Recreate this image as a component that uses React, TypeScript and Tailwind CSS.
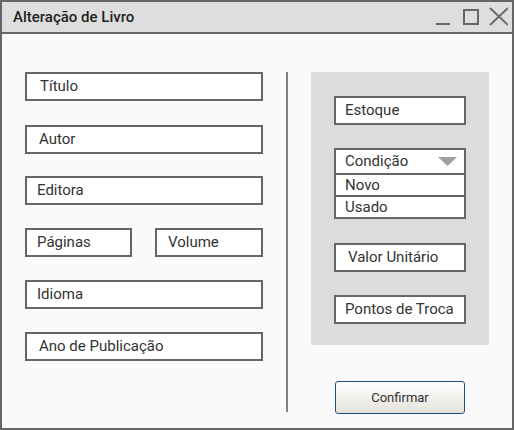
import React from "react";

function Field({ label, className = "", pl = "pl-[11px]" }: { label: string; className?: string; pl?: string }) {
  return (
    <div className={`h-[29px] border-2 border-[#666] bg-white flex items-center text-[15px] text-[#333] ${pl} ${className}`}>
      {label}
    </div>
  );
}

export default function App() {
  return (
    <div
      className="w-[514px] h-[430px] border-2 border-[#666] bg-[#fafafa] flex flex-col overflow-hidden"
      style={{ fontFamily: "Roboto, 'Liberation Sans', sans-serif" }}
    >
      <div className="h-[32px] shrink-0 bg-[#dedede] border-b-2 border-[#666] flex items-center pl-[11px]">
        <span className="text-[15px] font-medium text-[#222] mt-[1px]">Alteração de Livro</span>
        <svg className="ml-auto mr-[4px]" width="72" height="30" viewBox="0 0 72 30">
          <rect x="0" y="21" width="14" height="2" fill="#666" />
          <rect x="28" y="8" width="14" height="14" fill="none" stroke="#666" strokeWidth="2" />
          <path d="M54 6 L72 23 M72 6 L54 23" stroke="#666" strokeWidth="1.8" fill="none" />
        </svg>
      </div>
      <div className="flex pl-[23px] pt-[38px]">
        <div className="w-[238px] flex flex-col">
          <Field label="Título" pl="pl-[13px]" />
          <Field label="Autor" pl="pl-[12px]" className="mt-[24px]" />
          <Field label="Editora" pl="pl-[10px]" className="mt-[22px]" />
          <div className="flex justify-between mt-[23px]">
            <Field label="Páginas" pl="pl-[10px]" className="w-[107px]" />
            <Field label="Volume" pl="pl-[11px]" className="w-[108px]" />
          </div>
          <Field label="Idioma" pl="pl-[10px]" className="mt-[23px]" />
          <Field label="Ano de Publicação" pl="pl-[12px]" className="mt-[23px]" />
        </div>
        <div className="ml-[23px] w-[2px] h-[340px] bg-[#808080]" />
        <div className="ml-[23px] flex flex-col">
          <div className="w-[178px] h-[273px] bg-[#dcdcdc] pl-[23px] pt-[24px] flex flex-col">
            <Field label="Estoque" pl="pl-[9px]" className="w-[132px] h-[28px]" />
            <div className="mt-[23px] w-[132px] border-2 border-[#666] bg-white text-[15px] text-[#333]">
              <div className="h-[25px] flex items-center pl-[9px] border-b-2 border-[#666] leading-none">
                Condição
                <svg className="ml-auto mr-[7px]" width="19" height="9" viewBox="0 0 19 9">
                  <path d="M0 0 L19 0 L9.5 9 Z" fill="#a0a0a0" />
                </svg>
              </div>
              <div className="h-[22px] flex items-center pl-[9px] border-b-2 border-[#666] leading-none">Novo</div>
              <div className="h-[20px] flex items-center pl-[9px] leading-none">Usado</div>
            </div>
            <Field label="Valor Unitário" pl="pl-[12px]" className="mt-[24px] w-[132px] h-[28px]" />
            <Field label="Pontos de Troca" pl="pl-[9px]" className="mt-[23px] w-[132px] h-[28px]" />
          </div>
          <button className="mt-[36px] ml-[24px] w-[130px] h-[33px] rounded-[3px] border border-[#1f4e80] bg-gradient-to-b from-white to-[#e4e1da] text-[13px] text-[#333] flex items-center justify-center">
            Confirmar
          </button>
        </div>
      </div>
    </div>
  );
}
